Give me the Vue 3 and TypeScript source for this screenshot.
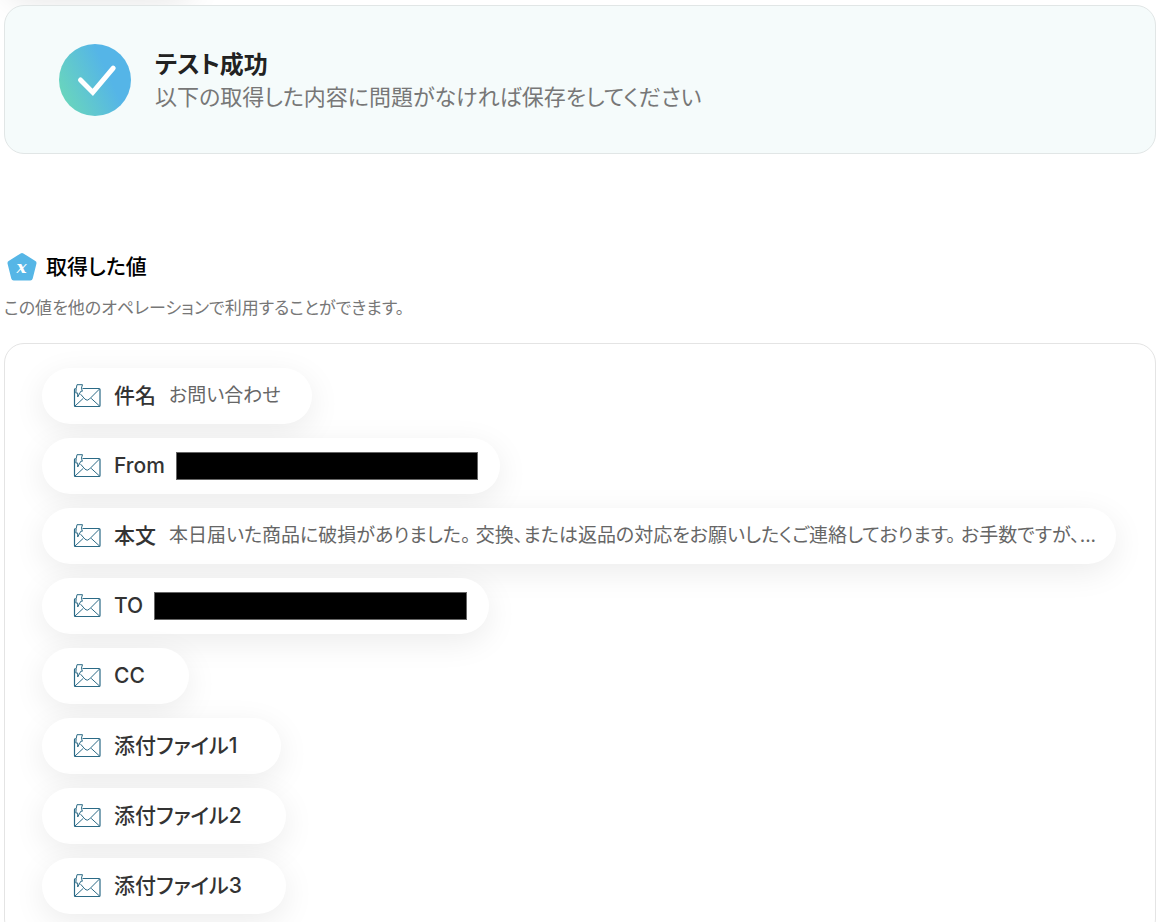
<script setup lang="ts">
interface Item {
  label: string
  value?: string
  long?: boolean
  redacted?: 'sender' | 'recipient'
}

const items: Item[] = [
  { label: '件名', value: 'お問い合わせ' },
  { label: 'From', redacted: 'sender' },
  {
    label: '本文',
    value:
      '本日届いた商品に破損がありました。 交換、または返品の対応をお願いしたくご連絡しております。 お手数ですが、...',
    long: true,
  },
  { label: 'TO', redacted: 'recipient' },
  { label: 'CC' },
  { label: '添付ファイル1' },
  { label: '添付ファイル2' },
  { label: '添付ファイル3' },
]
</script>

<template>
  <main class="page">
    <div class="scrolled-button" aria-hidden="true"></div>

    <section class="notice" role="status">
      <svg class="notice-icon" viewBox="0 0 72 72" aria-hidden="true">
        <defs>
          <linearGradient id="notice-fill" x1="0.05" y1="0.75" x2="0.7" y2="0.45">
            <stop offset="0" stop-color="#69d5bd" />
            <stop offset="1" stop-color="#55b5e7" />
          </linearGradient>
        </defs>
        <circle cx="36" cy="36" r="36" fill="url(#notice-fill)" />
        <path d="M21.5 36 33.800 48.400 54.200 24.200" fill="none" stroke="#fff" stroke-width="5" stroke-linecap="round" />
      </svg>
      <div>
        <h1 class="notice-title">テスト成功</h1>
        <p class="notice-text">以下の取得した内容に問題がなければ保存をしてください</p>
      </div>
    </section>

    <section class="values">
      <header class="heading">
        <svg class="heading-icon" viewBox="0 0 30 30" aria-hidden="true">
          <path
            d="M15 3.500 27 11.200 23.300 26H6.700L3 11.200Z"
            fill="#56b6e6"
            stroke="#56b6e6"
            stroke-width="5"
            stroke-linejoin="round"
          />
          <text x="14.500" y="20.500" text-anchor="middle" class="heading-x">x</text>
        </svg>
        <h2 class="heading-title">取得した値</h2>
      </header>
      <p class="description">この値を他のオペレーションで利用することができます。</p>

      <ul class="panel">
        <li
          v-for="item in items"
          :key="item.label"
          class="chip"
          :class="{ 'chip-redacted': item.redacted, 'chip-long': item.long }"
        >
          <svg class="mail" viewBox="0 0 28 24" fill="none" stroke="#2b6a86" aria-hidden="true">
            <path
              d="M9.500 4.500H26Q27 4.500 27 5.500V21.500Q27 22.500 26 22.500H2.500Q1.500 22.500 1.500 21.500V5.500Q1.500 4.500 2.800 4.500"
              stroke-width="1.200"
            />
            <path
              d="M2 22 10.200 14.400M26.500 22 18.200 14.400M26.500 5 16.500 15Q14.200 17.400 12 15.200L7.600 10.200"
              stroke-width="1"
            />
            <path
              d="M4 .7H9.500L8.400 4.200 9.400 7.200H7.900L4.700 13V9H2.800L3.200 4.600Z"
              stroke-width="1"
              stroke-linejoin="round"
            />
          </svg>
          <span class="label">{{ item.label }}</span>
          <span v-if="item.redacted" class="redaction" :class="item.redacted"></span>
          <span v-else class="value">{{ item.value }}</span>
        </li>
      </ul>
    </section>
  </main>
</template>

<style>
body {
  margin: 0;
  background: #fff;
}
</style>

<style scoped>
.page {
  position: relative;
  height: 100vh;
  box-sizing: border-box;
  padding: 5px 6px 0 4px;
  overflow: hidden;
  font-family: Inter, 'Noto Sans CJK JP', sans-serif;
  font-feature-settings: 'palt';
  color: #333;
}

.scrolled-button {
  position: absolute;
  top: -62px;
  left: 4px;
  width: 192px;
  height: 56px;
  border-radius: 28px;
  box-shadow: 0 8px 32px rgba(0, 0, 0, 0.1);
}

h1,
h2,
p,
ul {
  margin: 0;
  padding: 0;
}

.notice {
  position: relative;
  display: flex;
  align-items: center;
  gap: 24px;
  box-sizing: border-box;
  min-height: 149px;
  padding: 36px 54px;
  border: 1px solid #e1e6e6;
  border-radius: 20px;
  background: #f5fbfb;
}

.notice-icon {
  flex: none;
  width: 72px;
  height: 72px;
}

.notice-title {
  font-size: 24px;
  font-weight: 600;
  line-height: 34px;
  color: #222;
}

.notice-text {
  font-size: 22px;
  line-height: 30px;
  color: #777;
}

.values {
  padding-top: 96px;
}

.heading {
  display: flex;
  align-items: center;
  gap: 9px;
  padding-left: 3px;
}

.heading-icon {
  width: 30px;
  height: 30px;
}

.heading-x {
  font: italic bold 17px 'DejaVu Serif', serif;
  fill: #fff;
}

.heading-title {
  font-size: 21px;
  font-weight: 500;
  line-height: 34px;
  color: #000;
}

.description {
  margin-top: 12px;
  font-size: 17px;
  line-height: 24px;
  color: #777;
}

.panel {
  display: flex;
  flex-direction: column;
  align-items: flex-start;
  gap: 14px;
  margin-top: 23px;
  padding: 24px 37px;
  border: 1px solid #e4e4e4;
  border-radius: 20px;
  list-style: none;
}

.chip {
  display: flex;
  align-items: center;
  box-sizing: border-box;
  max-width: 100%;
  min-height: 56px;
  padding: 0 31px;
  border-radius: 28px;
  background: #fff;
  box-shadow: 0 8px 32px rgba(0, 0, 0, 0.08);
}

.chip-redacted {
  padding-right: 22px;
}

.chip-long {
  padding-right: 20px;
}

.mail {
  flex: none;
  width: 28px;
  height: 24px;
  margin-right: 13px;
}

.label {
  flex: none;
  font-size: 21px;
  font-weight: 500;
  line-height: 32px;
}

.value {
  margin-left: 13px;
  overflow: hidden;
  font-size: 19px;
  line-height: 28px;
  color: #666;
  text-overflow: ellipsis;
  white-space: nowrap;
}

.redaction {
  box-sizing: border-box;
  height: 28px;
  margin-left: 11px;
  border: 1px solid #666;
  background: #000;
}

.sender {
  width: 302px;
}

.recipient {
  width: 313px;
}
</style>
